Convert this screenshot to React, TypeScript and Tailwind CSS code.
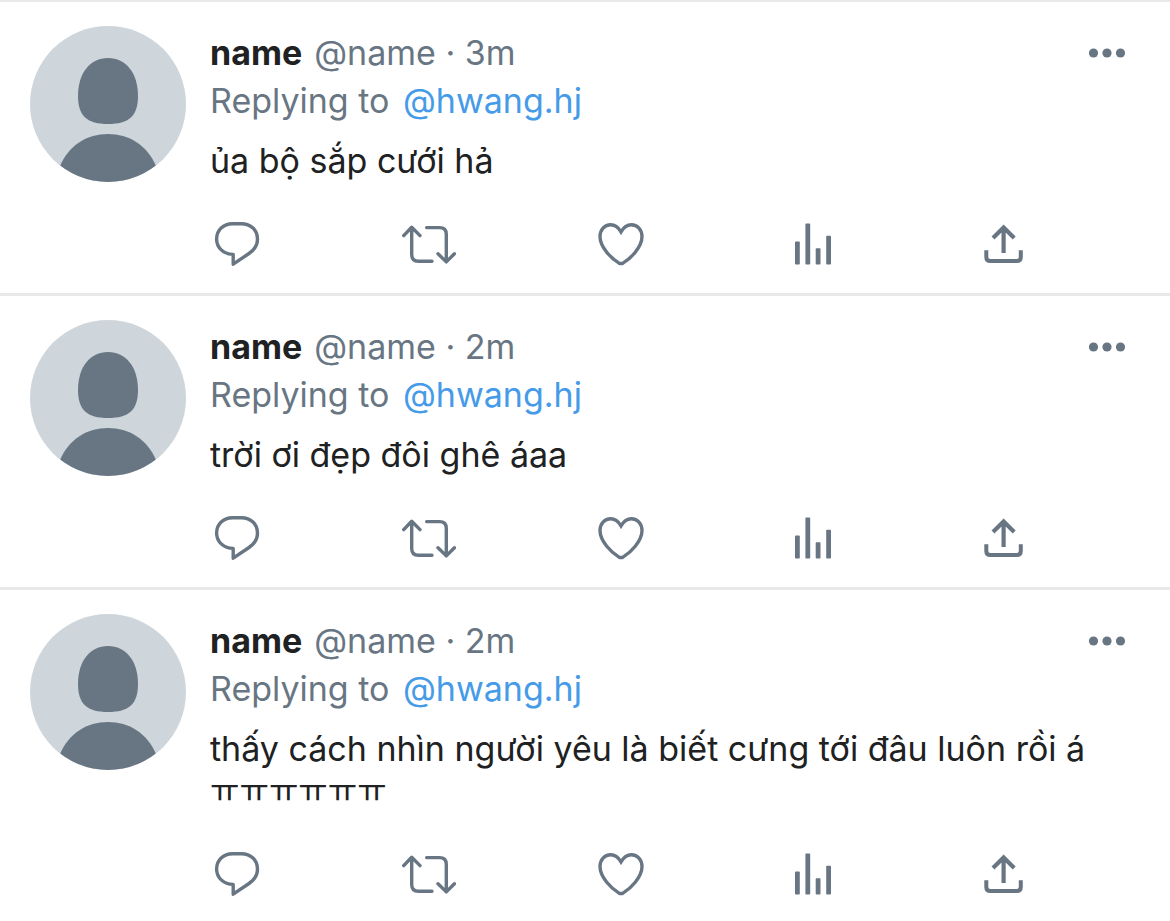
import type { ReactNode } from "react";

type Post = { id: number; age: string; text: string; korean?: string };

const posts: Post[] = [
  { id: 1, age: "3m", text: "ủa bộ sắp cưới hả" },
  { id: 2, age: "2m", text: "trời ơi đẹp đôi ghê áaa" },
  {
    id: 3,
    age: "2m",
    text: "thấy cách nhìn người yêu là biết cưng tới đâu luôn rồi á",
    korean: "ㅠㅠㅠㅠㅠㅠ",
  },
];

function Avatar() {
  return (
    <svg
      viewBox="0 0 156 156"
      className="size-[156px] shrink-0 rounded-full bg-[#ced6dc]"
      aria-hidden="true"
    >
      <path
        fill="#687683"
        d="M78 32C96 32 108 47 108 70C108 90 99 98 78 98C57 98 48 90 48 70C48 47 60 32 78 32Z"
      />
      <path
        fill="#687683"
        d="M30 140C39 119 57 108 78 108C99 108 117 119 126 140L126 156H30Z"
      />
    </svg>
  );
}

function ActionButton({ label, children }: { label: string; children: ReactNode }) {
  return (
    <button type="button" aria-label={label} className="cursor-pointer">
      <svg
        viewBox="0 0 54 48"
        className="block h-12 w-[54px]"
        fill="none"
        stroke="currentColor"
        strokeWidth="3.4"
        aria-hidden="true"
      >
        {children}
      </svg>
    </button>
  );
}

function Actions() {
  return (
    <div className="mt-[38px] flex justify-between pr-[110px] text-[#687683]">
      <ActionButton label="Reply">
        <path
          strokeLinejoin="round"
          d="M23.2 34.4C13.5 34.4 6.6 27.5 6.6 19C6.6 10.3 13.4 3.7 22.5 3.7H31.5C40.8 3.7 47.5 10.3 47.5 19C47.5 25.5 44.2 30 39 33.5L23.2 44.2Z"
        />
      </ActionButton>
      <ActionButton label="Repost">
        <g strokeLinecap="round" strokeLinejoin="round">
          <path d="M1.7 15.6L9.7 7.3L18 15.6M9.7 7.6V34.5Q9.7 41.3 16.5 41.3H30" />
          <path d="M36 33.8L44.3 41.9L52.4 33.8M44.3 41.6V14.3Q44.3 7.6 37.5 7.6H24.6" />
        </g>
      </ActionButton>
      <ActionButton label="Like">
        <path
          strokeLinejoin="miter"
          d="M28 11.8C25.2 7 21.2 4.7 17.6 4.7C11.5 4.7 7 9.8 7 16.6C7 27.5 18.7 38.6 25.7 42.9Q28 44.2 30.3 42.9C37.3 38.6 49 27.5 49 16.6C49 9.8 44.5 4.7 38.4 4.7C34.8 4.7 30.8 7 28 11.8Z"
        />
      </ActionButton>
      <ActionButton label="Analytics">
        <g fill="currentColor" stroke="none">
          <rect x="10" y="21.5" width="4.8" height="23" rx=".8" />
          <rect x="20.4" y="3.6" width="4.8" height="40.9" rx=".8" />
          <rect x="30.7" y="28.2" width="4.8" height="16.3" rx=".8" />
          <rect x="41.2" y="15.8" width="4.8" height="28.7" rx=".8" />
        </g>
      </ActionButton>
      <ActionButton label="Share">
        <path strokeWidth="4" d="M10.3 30.2V37Q10.3 41 14.3 41H40.7Q44.8 41 44.8 37V30.2" />
        <path strokeWidth="4.2" d="M27.6 33V7.4M17 18L27.6 7.4L38.2 18" />
      </ActionButton>
    </div>
  );
}

function PostItem({ post }: { post: Post }) {
  return (
    <article className="flex gap-6 border-b-[3px] border-[#e8e9ea] px-[30px] pt-6 pb-[25px]">
      <Avatar />
      <div className="min-w-0 flex-1 pt-[3px]">
        <header className="flex items-center gap-3 leading-[48px]">
          <span className="font-bold">name</span>
          <span className="text-[#687683]">@name · {post.age}</span>
          <button
            type="button"
            aria-label="More"
            className="mr-[14px] ml-auto cursor-pointer text-[#687683]"
          >
            <svg viewBox="0 0 38 12" className="block h-3 w-[38px]" fill="currentColor" aria-hidden="true">
              <circle cx="5.5" cy="6" r="4.6" />
              <circle cx="19" cy="6" r="4.6" />
              <circle cx="32.5" cy="6" r="4.6" />
            </svg>
          </button>
        </header>
        <p className="leading-[48px] text-[#687683]">
          Replying to{" "}
          <a href="#hwang.hj" className="ml-1 text-[#469be8]">
            @hwang.hj
          </a>
        </p>
        <p className="mt-[15px] leading-[42px]">
          {post.text}
          {post.korean && (
            <>
              {" "}
              <span lang="ko" className="inline-block align-top text-[32px]">
                {post.korean}
              </span>
            </>
          )}
        </p>
        <Actions />
      </div>
    </article>
  );
}

export default function App() {
  return (
    <main
      lang="vi"
      className="min-h-screen border-t-2 border-[#e8e9ea] bg-white font-['Inter','Noto_Sans_CJK_KR',sans-serif] text-[34px] text-[#202122]"
    >
      {posts.map((post) => (
        <PostItem key={post.id} post={post} />
      ))}
    </main>
  );
}
